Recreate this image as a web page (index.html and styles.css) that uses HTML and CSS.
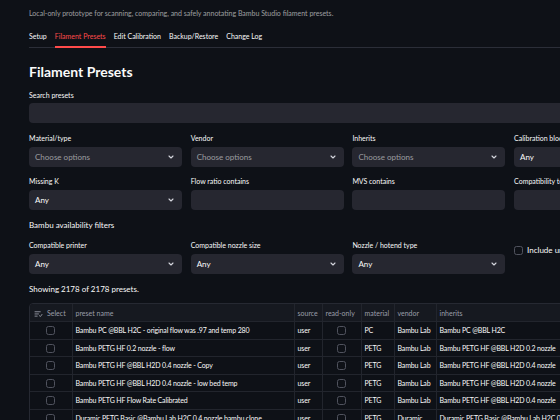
FILE: index.html
```html
<!DOCTYPE html>
<html lang="en">
<head>
  <meta charset="UTF-8">
  <meta name="viewport" content="width=device-width, initial-scale=1.0">
  <title>Filament Presets</title>
  <link rel="stylesheet" href="styles.css">
</head>
<body>
  <main class="app">
    <p class="caption">Local-only prototype for scanning, comparing, and safely annotating Bambu Studio filament presets.</p>

    <nav class="tabs">
      <span class="tab">Setup</span>
      <span class="tab active">Filament Presets</span>
      <span class="tab">Edit Calibration</span>
      <span class="tab">Backup/Restore</span>
      <span class="tab">Change Log</span>
    </nav>

    <h2 class="title">Filament Presets</h2>

    <div class="field search">
      <label>Search presets</label>
      <div class="input"></div>
    </div>

    <div class="filters">
      <div class="field">
        <label>Material/type</label>
        <div class="input select placeholder">Choose options<svg viewBox="0 0 8 8"><path d="M2 3l2 2 2-2"/></svg></div>
      </div>
      <div class="field">
        <label>Vendor</label>
        <div class="input select placeholder">Choose options<svg viewBox="0 0 8 8"><path d="M2 3l2 2 2-2"/></svg></div>
      </div>
      <div class="field">
        <label>Inherits</label>
        <div class="input select placeholder">Choose options<svg viewBox="0 0 8 8"><path d="M2 3l2 2 2-2"/></svg></div>
      </div>
      <div class="field">
        <label>Calibration block</label>
        <div class="input select">Any<svg viewBox="0 0 8 8"><path d="M2 3l2 2 2-2"/></svg></div>
      </div>

      <div class="field">
        <label>Missing K</label>
        <div class="input select">Any<svg viewBox="0 0 8 8"><path d="M2 3l2 2 2-2"/></svg></div>
      </div>
      <div class="field">
        <label>Flow ratio contains</label>
        <div class="input"></div>
      </div>
      <div class="field">
        <label>MVS contains</label>
        <div class="input"></div>
      </div>
      <div class="field">
        <label>Compatibility text contains</label>
        <div class="input"></div>
      </div>
    </div>

    <p class="text">Bambu availability filters</p>

    <div class="filters">
      <div class="field">
        <label>Compatible printer</label>
        <div class="input select">Any<svg viewBox="0 0 8 8"><path d="M2 3l2 2 2-2"/></svg></div>
      </div>
      <div class="field">
        <label>Compatible nozzle size</label>
        <div class="input select">Any<svg viewBox="0 0 8 8"><path d="M2 3l2 2 2-2"/></svg></div>
      </div>
      <div class="field">
        <label>Nozzle / hotend type</label>
        <div class="input select">Any<svg viewBox="0 0 8 8"><path d="M2 3l2 2 2-2"/></svg></div>
      </div>
      <div class="check-field">
        <span class="box"></span>
        <span>Include unknown compatibility</span>
      </div>
    </div>

    <p class="text">Showing 2178 of 2178 presets.</p>

    <div class="grid-wrap">
      <table class="grid">
        <colgroup>
          <col class="c-select">
          <col class="c-name">
          <col class="c-source">
          <col class="c-ro">
          <col class="c-mat">
          <col class="c-vendor">
          <col class="c-inherits">
        </colgroup>
        <thead>
          <tr>
            <th class="sel-head">
              <svg viewBox="0 0 10 8"><path d="M1 2h6M1 4.5h4M1 7h2.5M6 6.5l1.2 1L9 5"/></svg>Select
            </th>
            <th>preset name</th>
            <th>source</th>
            <th>read-only</th>
            <th>material</th>
            <th>vendor</th>
            <th>inherits</th>
          </tr>
        </thead>
        <tbody>
          <tr>
            <td class="center"><span class="box"></span></td>
            <td>Bambu PC @BBL H2C - original flow was .97 and temp 280</td>
            <td>user</td>
            <td class="center"><span class="box"></span></td>
            <td>PC</td>
            <td>Bambu Lab</td>
            <td>Bambu PC @BBL H2C</td>
          </tr>
          <tr>
            <td class="center"><span class="box"></span></td>
            <td>Bambu PETG HF 0.2 nozzle - flow</td>
            <td>user</td>
            <td class="center"><span class="box"></span></td>
            <td>PETG</td>
            <td>Bambu Lab</td>
            <td>Bambu PETG HF @BBL H2D 0.2 nozzle</td>
          </tr>
          <tr>
            <td class="center"><span class="box"></span></td>
            <td>Bambu PETG HF @BBL H2D 0.4 nozzle - Copy</td>
            <td>user</td>
            <td class="center"><span class="box"></span></td>
            <td>PETG</td>
            <td>Bambu Lab</td>
            <td>Bambu PETG HF @BBL H2D 0.4 nozzle</td>
          </tr>
          <tr>
            <td class="center"><span class="box"></span></td>
            <td>Bambu PETG HF @BBL H2D 0.4 nozzle - low bed temp</td>
            <td>user</td>
            <td class="center"><span class="box"></span></td>
            <td>PETG</td>
            <td>Bambu Lab</td>
            <td>Bambu PETG HF @BBL H2D 0.4 nozzle</td>
          </tr>
          <tr>
            <td class="center"><span class="box"></span></td>
            <td>Bambu PETG HF Flow Rate Calibrated</td>
            <td>user</td>
            <td class="center"><span class="box"></span></td>
            <td>PETG</td>
            <td>Bambu Lab</td>
            <td>Bambu PETG HF @BBL H2D 0.4 nozzle</td>
          </tr>
          <tr>
            <td class="center"><span class="box"></span></td>
            <td>Duramic PETG Basic @Bambu Lab H2C 0.4 nozzle bambu clone</td>
            <td>user</td>
            <td class="center"><span class="box"></span></td>
            <td>PETG</td>
            <td>Duramic</td>
            <td>Duramic PETG Basic @Bambu Lab H2C 0.4 nozzle</td>
          </tr>
        </tbody>
      </table>
    </div>
  </main>
</body>
</html>
```

FILE: styles.css
```css
body {
  margin: 0;
  background: #0e1117;
  color: #fafafa;
  font-family: Lato, "Noto Sans", sans-serif;
  overflow: hidden;
}
.app {
  width: 638px;
  padding: 8px 0 0 29px;
}
.caption {
  margin: 0;
  font-size: 7px;
  line-height: 11px;
  color: rgba(250, 250, 250, 0.6);
}
.tabs {
  display: flex;
  gap: 8px;
  margin-top: 12px;
  border-bottom: 1px solid #2b2e38;
}
.tab {
  font-size: 7px;
  line-height: 11px;
  padding-bottom: 4px;
  border-bottom: 2px solid transparent;
  margin-bottom: -1px;
}
.tab.active {
  color: #ff4b4b;
  border-bottom-color: #ff4b4b;
}
.title {
  margin: 14px 0 0;
  font-size: 14px;
  line-height: 20px;
  font-weight: 700;
}
.field label {
  display: block;
  font-size: 7px;
  line-height: 10px;
  margin-bottom: 4px;
}
.search {
  margin-top: 8px;
}
.search label {
  margin-bottom: 3px;
}
.input {
  height: 20px;
  background: #262730;
  border-radius: 4px;
  box-sizing: border-box;
  padding: 0 7px 0 6px;
  display: flex;
  align-items: center;
  justify-content: space-between;
  font-size: 8px;
}
.input.placeholder {
  color: rgba(250, 250, 250, 0.55);
}
.input svg {
  width: 8px;
  height: 8px;
  fill: none;
  stroke: #d5d7de;
  stroke-width: 1.1;
  stroke-linecap: round;
  stroke-linejoin: round;
}
.filters {
  display: grid;
  grid-template-columns: repeat(4, 153px);
  column-gap: 8.7px;
  row-gap: 9px;
  margin-top: 10px;
}
.text {
  margin: 10px 0 0;
  font-size: 8px;
  line-height: 10px;
}
.check-field {
  display: flex;
  align-items: center;
  gap: 4px;
  margin-top: 5px;
  align-self: start;
  font-size: 8px;
  white-space: nowrap;
}
.box {
  display: inline-block;
  width: 9px;
  height: 9px;
  box-sizing: border-box;
  border: 1px solid #50535e;
  border-radius: 2.5px;
  vertical-align: middle;
}
.grid-wrap {
  margin-top: 9px;
  border: 1px solid #262932;
  border-radius: 4px;
  overflow: hidden;
  width: 640px;
}
.grid {
  border-collapse: collapse;
  table-layout: fixed;
  width: 100%;
  font-size: 7px;
}
.c-select { width: 42px; }
.c-name { width: 222px; }
.c-source { width: 28px; }
.c-ro { width: 39px; }
.c-mat { width: 33px; }
.c-vendor { width: 42px; }
.grid th,
.grid td {
  padding: 0 3px;
  text-align: left;
  white-space: nowrap;
  overflow: hidden;
  border-right: 1px solid #22252d;
  border-bottom: 1px solid #22252d;
}
.grid th {
  height: 17px;
  background: #161920;
  color: #9a9ea9;
  font-weight: 400;
}
.grid td {
  height: 16.5px;
  letter-spacing: -0.15px;
}
.grid .center {
  text-align: center;
}
.sel-head svg {
  width: 9px;
  height: 7px;
  margin: 0 4px 0 1px;
  vertical-align: -1px;
  fill: none;
  stroke: #9a9ea9;
  stroke-width: 1;
  stroke-linecap: round;
}
```
